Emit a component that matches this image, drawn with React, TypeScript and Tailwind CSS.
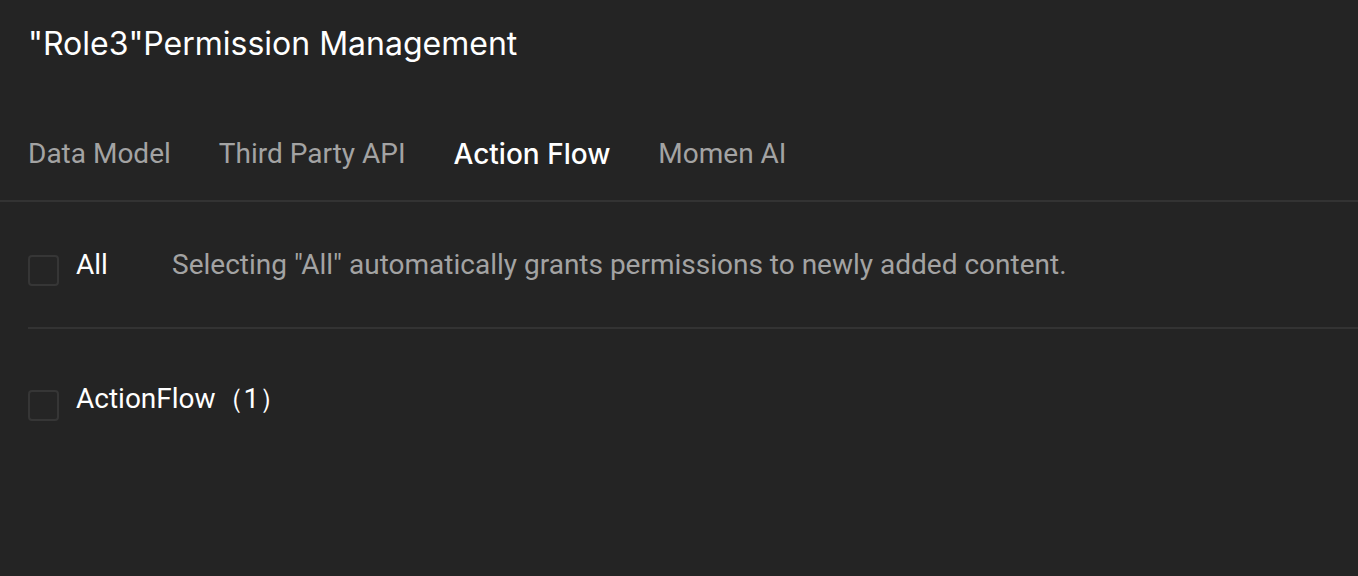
import React from 'react'

const tabs = ['Data Model', 'Third Party API', 'Action Flow', 'Momen AI']

const Checkbox = () => (
    <span className="block w-[31px] h-[31px] shrink-0 mt-3 rounded-[4px] border-2 border-[#363636] bg-[#252525]" />
)

export default function App() {
    const active = 'Action Flow'

    return (
        <div className="w-[1358px] h-[576px] bg-[#242424] overflow-hidden font-['Roboto',sans-serif]">
            {/* Title */}
            <div className="h-[88px] pl-7 pt-[24px]">
                <h1 className="font-['Inter',sans-serif] text-[32px] leading-[40px] text-white">
                    "Role3"Permission Management
                </h1>
            </div>

            {/* Tabs */}
            <div className="h-[114px] flex items-center gap-[48px] pl-7 border-b-2 border-[#333333] pt-[20px]">
                {tabs.map((tab) => (
                    <button
                        key={tab}
                        className={`text-[28px] leading-8 ${tab === active ? "text-white font-medium font-['Inter',sans-serif]" : 'text-[#a3a3a3]'}`}
                    >
                        {tab}
                    </button>
                ))}
            </div>

            {/* Rows */}
            <div className="pl-7">
                <div className="h-[127px] flex items-center border-b-2 border-[#333333]">
                    <div className="flex items-center gap-[17px] w-[144px]">
                        <Checkbox />
                        <span className="text-[28px] text-white">All</span>
                    </div>
                    <span className="text-[28px] text-[#a3a3a3]">
                        Selecting "All" automatically grants permissions to newly added content.
                    </span>
                </div>
                <div className="h-[140px] flex items-center gap-[17px]">
                    <Checkbox />
                    <span className="text-[28px] text-white">ActionFlow（1）</span>
                </div>
            </div>
        </div>
    )
}
